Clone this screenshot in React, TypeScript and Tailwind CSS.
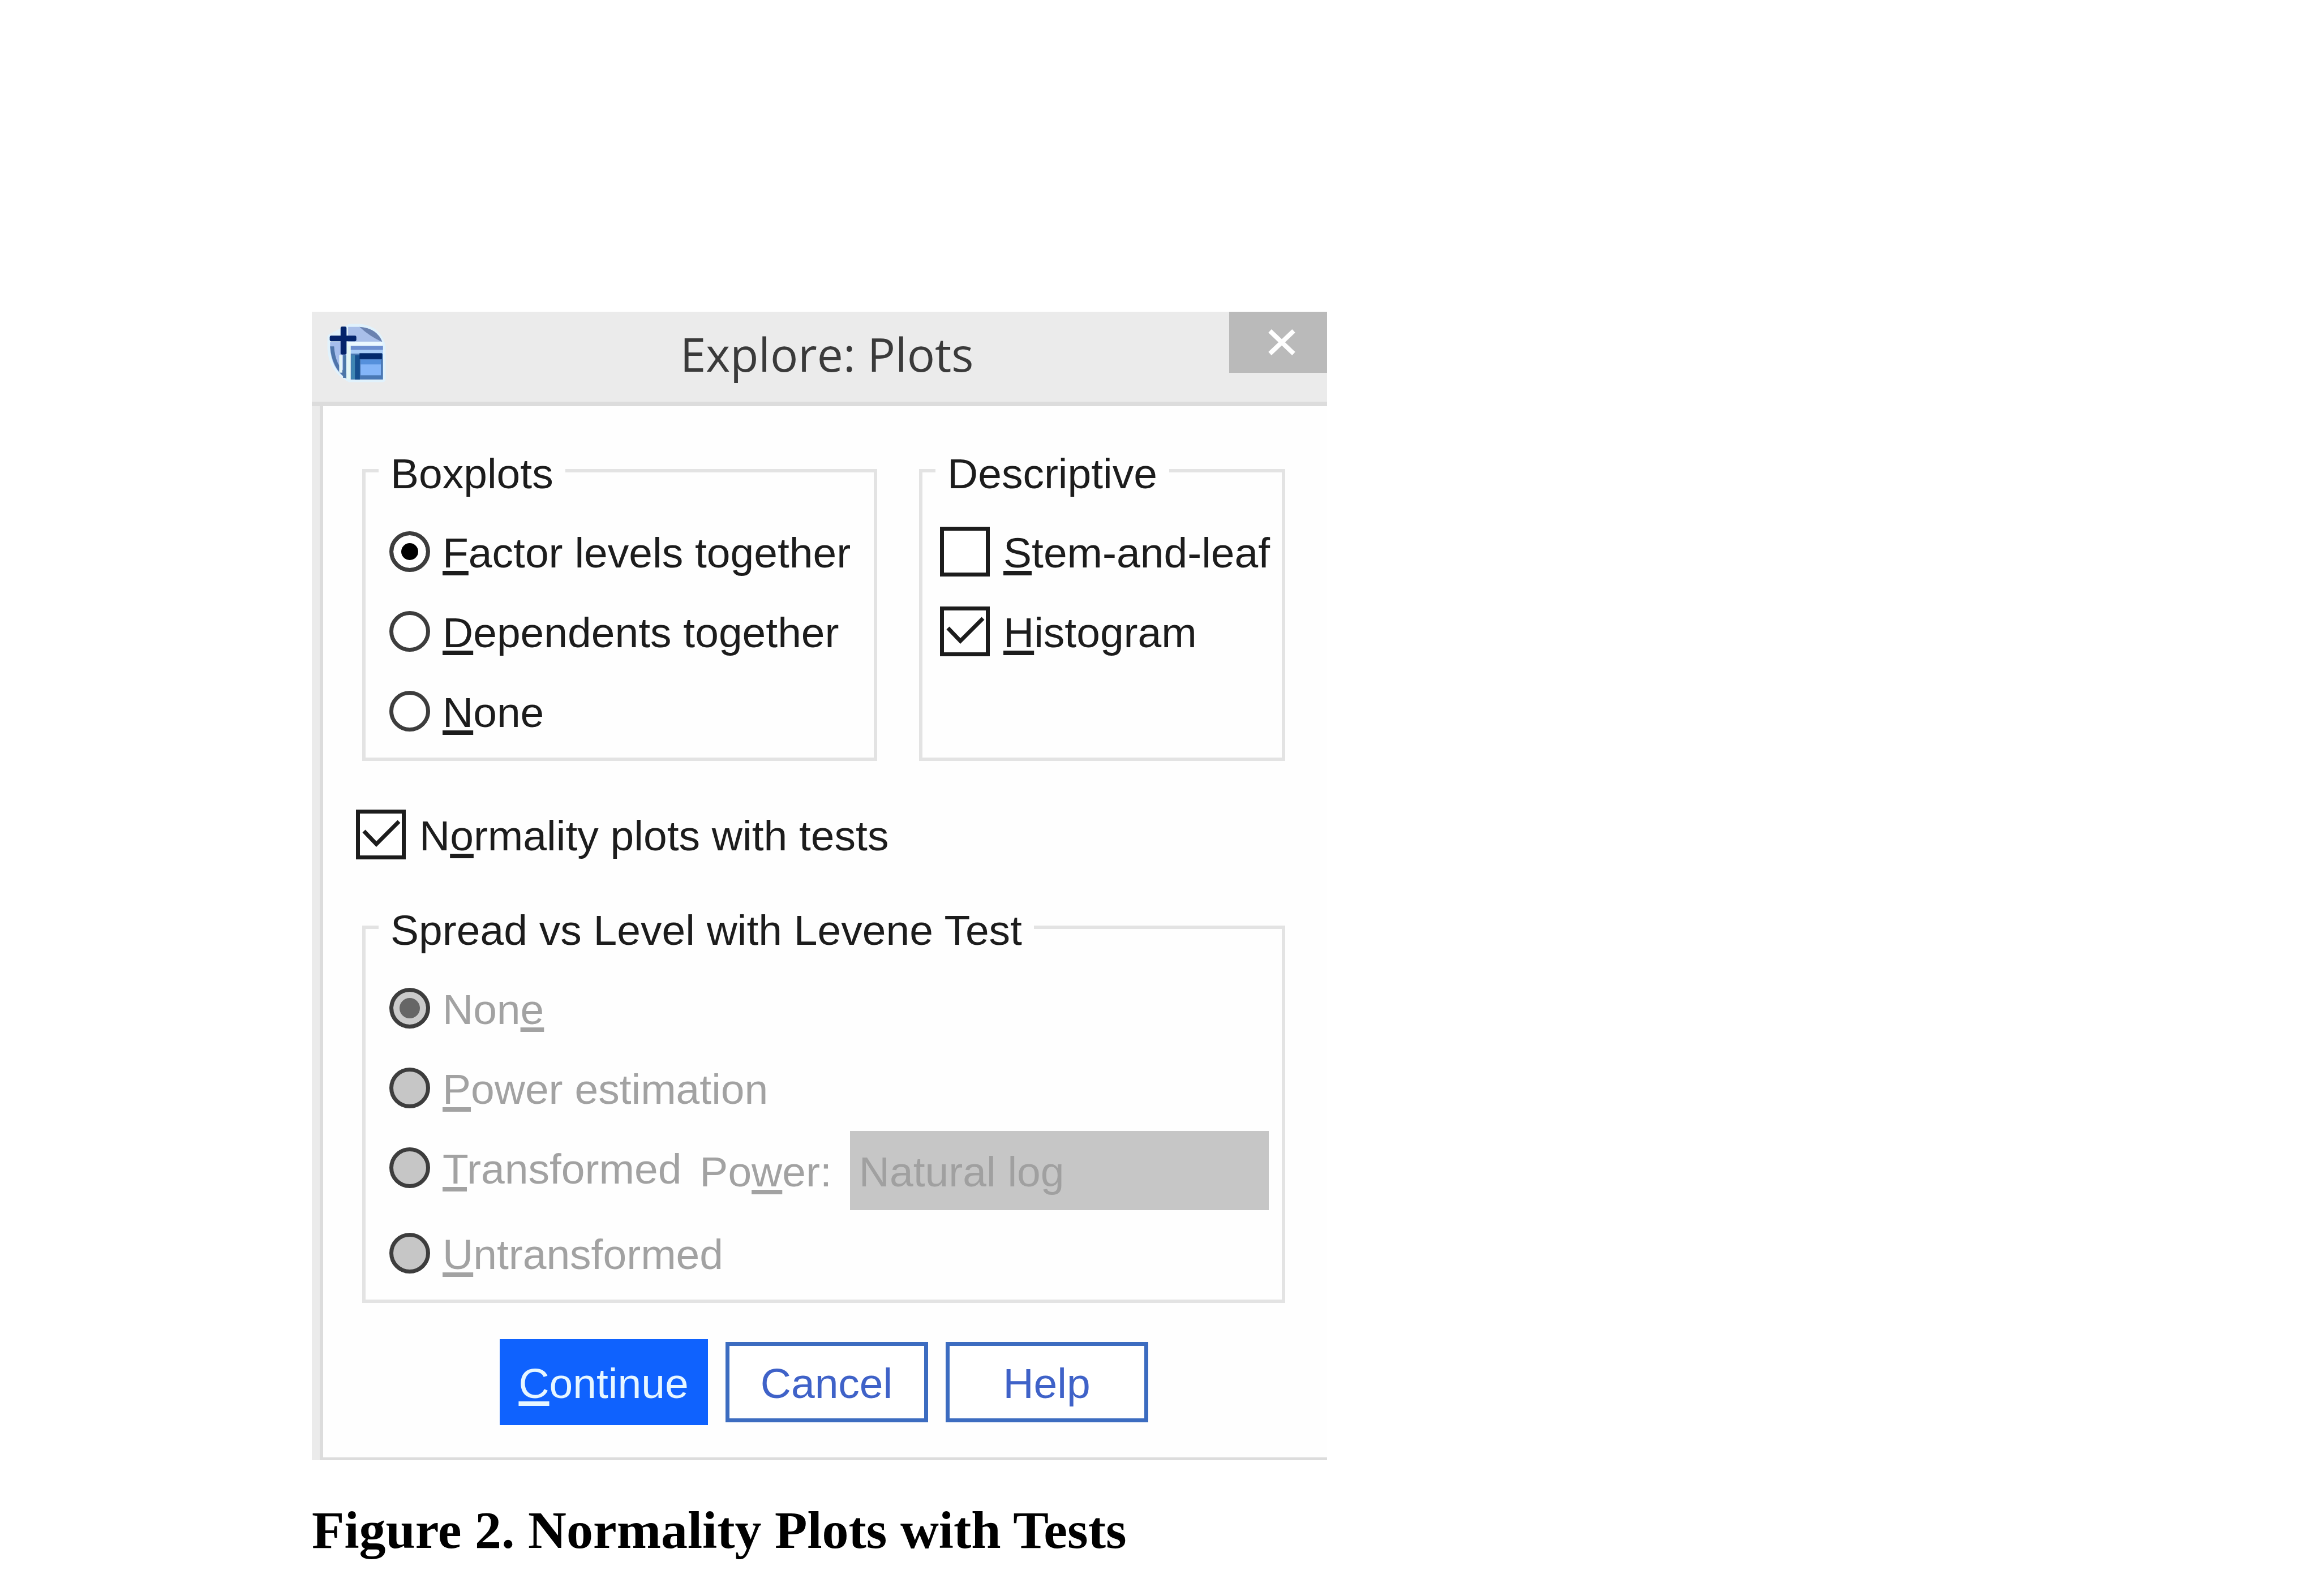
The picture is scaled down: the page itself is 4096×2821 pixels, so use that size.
import React from "react";

const SpssLogo = () => {
  return (
    <svg
      viewBox="118 98 310 310"
      className="ml-[31px] mt-[25px] size-24 shrink-0 overflow-visible"
      aria-hidden="true"
    >
      <path
        d="M235 102H290Q400 112 424 215V404H232Q130 350 122 230V160Z"
        fill="#e1f2fc"
        stroke="#e1f2fc"
        strokeWidth="30"
        strokeLinejoin="round"
      />
      <path d="M225 104H290Q390 112 420 190H225Z" fill="#a9bfe9" />
      <path d="M290 104Q390 112 420 190Q350 160 290 104Z" fill="#6a82b0" />
      <path d="M122 190H215V398Q128 345 122 220Z" fill="#a5bdec" />
      <path d="M122 215Q132 340 215 400V370Q150 320 145 215Z" fill="#4f75aa" />
      <rect x="174" y="265" width="18" height="100" fill="#e4f5f6" />
      <rect x="196" y="265" width="18" height="130" fill="#4b77a8" />
      <rect x="216" y="188" width="24" height="214" fill="#e4f7f4" />
      <rect x="225" y="188" width="196" height="24" fill="#ecf8ff" />
      <rect x="240" y="212" width="184" height="24" fill="#6d8fd0" />
      <rect x="240" y="236" width="184" height="20" fill="#a9cdf7" />
      <rect x="240" y="256" width="184" height="148" fill="#4a78b4" />
      <rect x="244" y="266" width="20" height="136" fill="#3f86b3" />
      <rect x="264" y="266" width="28" height="138" fill="#164f8f" />
      <rect x="290" y="254" width="128" height="34" fill="#032a6c" />
      <rect x="296" y="290" width="116" height="30" fill="#5590dc" />
      <rect x="296" y="318" width="116" height="62" fill="#84b5f8" />
      <rect x="182" y="102" width="34" height="160" rx="8" fill="#04246b" />
      <rect x="120" y="154" width="152" height="32" rx="8" fill="#04246b" />
    </svg>
  );
};

// Underlined access key inside a label
const Key = ({ children }: { children: string }) => (
  <span className="underline decoration-8 underline-offset-[6px] [text-decoration-skip-ink:none]">
    {children}
  </span>
);

type OptionProps = {
  name: string;
  checked?: boolean;
  disabled?: boolean;
  children: React.ReactNode;
};

const Radio = ({ name, checked, disabled, children }: OptionProps) => {
  return (
    <label
      className={
        disabled
          ? "flex h-[141px] items-center gap-[22px] pl-[19px] whitespace-nowrap text-[#a2a2a2]"
          : "flex h-[141px] items-center gap-[22px] pl-[19px] whitespace-nowrap"
      }
    >
      <input
        type="radio"
        name={name}
        defaultChecked={checked}
        disabled={disabled}
        className="size-[72px] shrink-0 appearance-none rounded-full border-7 border-[#3d3d3d] bg-white checked:bg-black checked:shadow-[inset_0_0_0_14px_#fff] disabled:bg-[#c6c6c6] disabled:checked:bg-[#666] disabled:checked:shadow-[inset_0_0_0_11px_#cbcbcb]"
      />
      <span className="pt-1">{children}</span>
    </label>
  );
};

const Checkbox = ({ name, checked, children }: OptionProps) => {
  return (
    <label className="flex h-[141px] items-center gap-6 whitespace-nowrap">
      <span className="grid size-[88px] shrink-0">
        <input
          type="checkbox"
          name={name}
          defaultChecked={checked}
          className="peer col-start-1 row-start-1 appearance-none border-7 border-[#1c1c1c] bg-white"
        />
        <svg
          viewBox="0 0 88 88"
          className="pointer-events-none invisible col-start-1 row-start-1 peer-checked:visible"
          aria-hidden="true"
        >
          <path d="M14 38L36 61L76 21" fill="none" stroke="#1c1c1c" strokeWidth="7" />
        </svg>
      </span>
      <span className="pt-1">{children}</span>
    </label>
  );
};

const Group = ({ title, children }: { title: string; children: React.ReactNode }) => {
  return (
    <fieldset className="min-w-0 border-6 border-[#e3e3e3] px-[23px] pb-3">
      <legend className="px-[21px] pt-2.5 whitespace-nowrap">{title}</legend>
      <div className="pt-[25px]">{children}</div>
    </fieldset>
  );
};

const ExplorePlots = () => {
  return (
    <section className="w-[43.8vw] bg-[#ebebeb] font-['Liberation_Sans',Arial,sans-serif] text-[75px] leading-[84px] text-[#1c1c1c]">
      <header className="flex h-[167px] items-start border-b-8 border-[#dcdcdc]">
        <SpssLogo />
        <h1 className="flex-1 pl-[72px] text-center font-['Open_Sans','Noto_Sans',sans-serif] text-[82px] leading-[148px] text-[#3a3a3a]">
          Explore: Plots
        </h1>
        <button
          type="button"
          aria-label="Close"
          className="flex h-[108px] w-[173px] items-center justify-center bg-[#bababa] pl-3"
        >
          <svg viewBox="0 0 50 46" className="h-[46px] w-[50px]" aria-hidden="true">
            <path d="M4 3L46 43M46 3L4 43" fill="none" stroke="#fff" strokeWidth="8" />
          </svg>
        </button>
      </header>

      <form className="ml-3.5 border-b-5 border-l-6 border-[#dcdcdc] bg-[#fefefe] pt-[67px] pr-[74px] pb-[57px] pl-[58px]">
        <div className="grid grid-cols-[910fr_647fr] gap-[74px] pl-[11px]">
          <Group title="Boxplots">
            <Radio name="boxplots" checked>
              <Key>F</Key>actor levels together
            </Radio>
            <Radio name="boxplots">
              <Key>D</Key>ependents together
            </Radio>
            <Radio name="boxplots">
              <Key>N</Key>one
            </Radio>
          </Group>
          <Group title="Descriptive">
            <div className="pl-2">
              <Checkbox name="stem">
                <Key>S</Key>tem-and-leaf
              </Checkbox>
              <Checkbox name="histogram" checked>
                <Key>H</Key>istogram
              </Checkbox>
            </div>
          </Group>
        </div>

        <div className="mt-[59px]">
          <Checkbox name="normality" checked>
            N<Key>o</Key>rmality plots with tests
          </Checkbox>
        </div>

        <div className="mt-[47px] pl-[11px]">
          <Group title="Spread vs Level with Levene Test">
            <Radio name="spread" checked disabled>
              Non<Key>e</Key>
            </Radio>
            <Radio name="spread" disabled>
              <Key>P</Key>ower estimation
            </Radio>
            <div className="flex h-[151px] items-start">
              <Radio name="spread" disabled>
                <Key>T</Key>ransformed
              </Radio>
              <div className="ml-8 flex h-full flex-1 items-center gap-8">
                <label htmlFor="power" className="pt-1 whitespace-nowrap text-[#a2a2a2]">
                  Po<Key>w</Key>er:
                </label>
                <select
                  id="power"
                  disabled
                  className="h-[140px] min-w-0 flex-1 appearance-none bg-[#c6c6c6] pt-1 pl-4 text-[#a0a0a0] opacity-100"
                >
                  <option>Natural log</option>
                </select>
              </div>
            </div>
            <Radio name="spread" disabled>
              <Key>U</Key>ntransformed
            </Radio>
          </Group>
        </div>

        <div className="mt-16 flex items-center justify-center gap-[31px] pl-[11px]">
          <button type="button" className="h-[152px] w-[368px] bg-[#0f62fe] pt-1 text-[#e6f6ff]">
            <Key>C</Key>ontinue
          </button>
          <button
            type="button"
            className="h-[142px] w-[358px] border-7 border-[#3c6cc0] bg-white pt-1 text-[#3f62c8]"
          >
            Cancel
          </button>
          <button
            type="button"
            className="h-[142px] w-[358px] border-7 border-[#3c6cc0] bg-white pt-1 text-[#3f62c8]"
          >
            Help
          </button>
        </div>
      </form>
    </section>
  );
};

const App = () => {
  return (
    <main className="min-h-screen bg-white">
      <figure className="pt-[551px] pl-[551px]">
        <ExplorePlots />
        <figcaption className="mt-[63px] font-['Liberation_Serif','Times_New_Roman',serif] text-[94px] leading-[120px] font-bold text-black">
          Figure 2. Normality Plots with Tests
        </figcaption>
      </figure>
    </main>
  );
};

export default App;
